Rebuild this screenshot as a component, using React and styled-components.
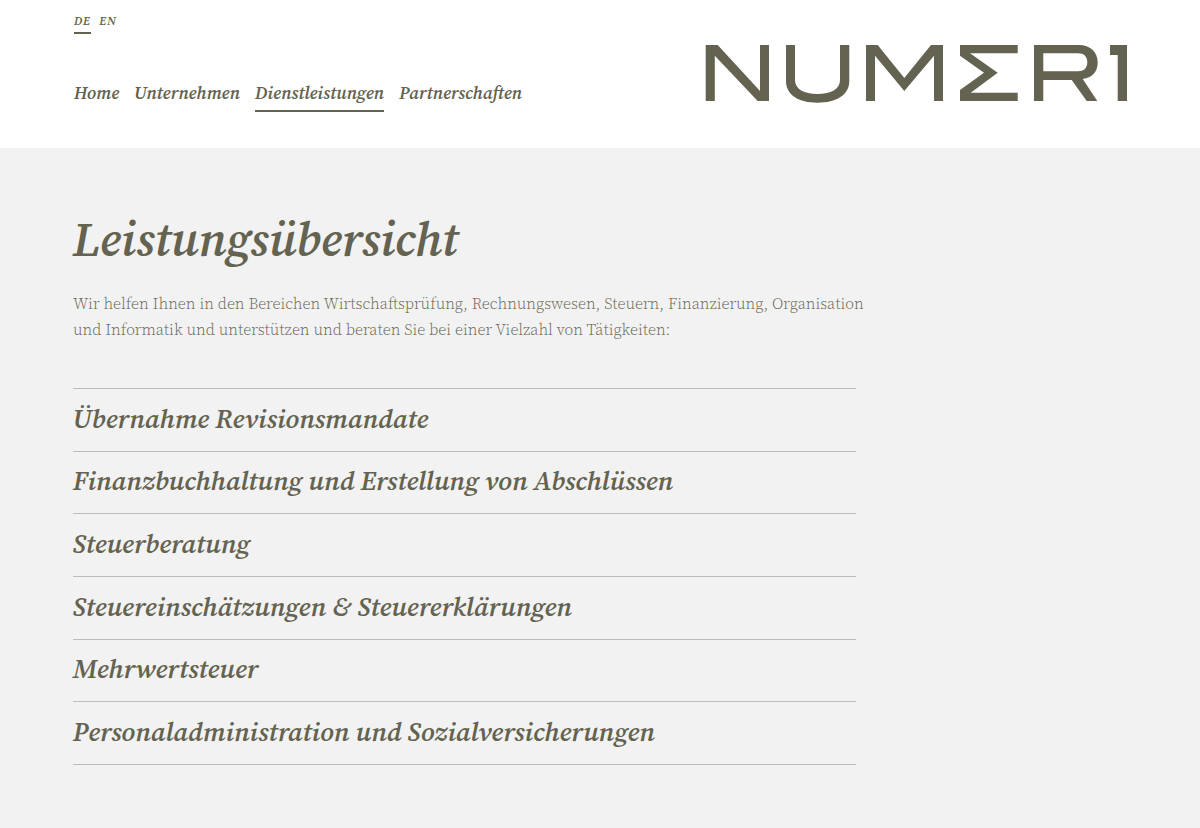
import React from "react";
import styled, { createGlobalStyle } from "styled-components";

const ink = "#646250";

const GlobalStyle = createGlobalStyle`
  *, *::before, *::after { box-sizing: border-box; }
  body {
    margin: 0;
    background: #f2f2f2;
    color: ${ink};
    font-family: "Source Serif Pro", "Source Serif 4", "Liberation Serif", serif;
  }
`;

const Header = styled.header`
  display: flex;
  justify-content: space-between;
  align-items: flex-start;
  gap: 32px;
  min-height: 148px;
  padding: 12px 72px 0 74px;
  background: #fff;
`;

const Menus = styled.div`
  display: flex;
  flex-direction: column;
  gap: 44px;
`;

const Nav = styled.nav`
  display: flex;
  gap: ${({ $small }) => ($small ? 8 : 15)}px;
`;

const NavLink = styled.a`
  padding-bottom: 2px;
  border-bottom: 2px solid ${({ $active }) => ($active ? ink : "transparent")};
  color: inherit;
  font-size: 18px;
  font-style: italic;
  font-weight: 600;
  line-height: 30px;
  text-decoration: none;
`;

const LanguageLink = styled(NavLink)`
  font-size: 12px;
  letter-spacing: 1px;
  line-height: 18px;
`;

const LogoLink = styled.a`
  display: block;
  flex: 0 1 423px;
  padding-top: 32px;
  color: inherit;

  svg {
    display: block;
    width: 100%;
  }
`;

const Main = styled.main`
  padding: 59px 64px 64px 73px;
`;

const Content = styled.div`
  max-width: 792px;
`;

const Title = styled.h1`
  margin: 0 0 19px;
  font-size: 48px;
  font-style: italic;
  font-weight: 600;
  line-height: 64px;
`;

const Intro = styled.p`
  margin: 0 0 46px;
  font-size: 16px;
  font-weight: 350;
  line-height: 26px;
`;

const Services = styled.ul`
  display: grid;
  grid-auto-rows: 1fr;
  max-width: 783px;
  min-height: 377px;
  margin: 0;
  padding: 0;
  border-top: 1px solid #bcbcbc;
  list-style: none;
`;

const Service = styled.li`
  display: flex;
  border-bottom: 1px solid #bcbcbc;
`;

const ServiceTitle = styled.h2`
  display: flex;
  flex: 1;
  margin: 0;
  font-size: 27px;
  font-weight: 600;
`;

const ServiceButton = styled.button`
  flex: 1;
  padding: 0 0 2px;
  border: 0;
  background: none;
  color: inherit;
  cursor: pointer;
  font: inherit;
  font-style: italic;
  line-height: 36px;
  text-align: left;
`;

const languages = ["DE", "EN"];
const pages = ["Home", "Unternehmen", "Dienstleistungen", "Partnerschaften"];
const services = [
  "Übernahme Revisionsmandate",
  "Finanzbuchhaltung und Erstellung von Abschlüssen",
  "Steuerberatung",
  "Steuereinschätzungen & Steuererklärungen",
  "Mehrwertsteuer",
  "Personaladministration und Sozialversicherungen",
];

function Logo() {
  return (
    <svg viewBox="0 0 423 60" fill="currentColor" aria-hidden="true">
      <path d="M.7 57V1h12L55 47V1h9v56H52.700L9.800 11.700V57Z" />
      <path d="M81 1h9v35c0 9 9 14 22.500 14S135 45 135 36V1h9.300v36c0 14-13 21.700-31.800 21.700S81 51 81 37Z" />
      <path d="M161 57V1h11.700l26.600 33L226 1h12v56h-9V11.700L199.300 47 170 11.700V57Z" />
      <path d="M255 1h57.700v8.300H265l27.700 19.400L265.700 48.700h47V57H255V46l24-17.300-24-17Z" />
      <path fillRule="evenodd" d="M329 57V1h45c11 0 18.700 7 18.700 17.500 0 9-5.500 15.500-15 16.500l14.600 22h-10.600l-15-21h-28.400v21Zm9.300-29.700H373c6 0 9.300-3.300 9.300-9s-3.300-9-9.300-9h-34.700Z" />
      <path d="M405 1h17v56h-9.300V11H405Z" />
    </svg>
  );
}

export default function App() {
  return (
    <>
      <GlobalStyle />
      <Header>
        <Menus>
          <Nav $small aria-label="Sprache">
            {languages.map((name) => (
              <LanguageLink key={name} href="#" $active={name === "DE"}>
                {name}
              </LanguageLink>
            ))}
          </Nav>
          <Nav aria-label="Hauptmenü">
            {pages.map((name) => (
              <NavLink key={name} href="#" $active={name === "Dienstleistungen"}>
                {name}
              </NavLink>
            ))}
          </Nav>
        </Menus>
        <LogoLink href="#" aria-label="Numeri">
          <Logo />
        </LogoLink>
      </Header>
      <Main>
        <Content>
          <Title>Leistungsübersicht</Title>
          <Intro>
            Wir helfen Ihnen in den Bereichen Wirtschaftsprüfung, Rechnungswesen,
            Steuern, Finanzierung, Organisation und Informatik und unterstützen
            und beraten Sie bei einer Vielzahl von Tätigkeiten:
          </Intro>
          <Services>
            {services.map((name) => (
              <Service key={name}>
                <ServiceTitle>
                  <ServiceButton type="button">{name}</ServiceButton>
                </ServiceTitle>
              </Service>
            ))}
          </Services>
        </Content>
      </Main>
    </>
  );
}
